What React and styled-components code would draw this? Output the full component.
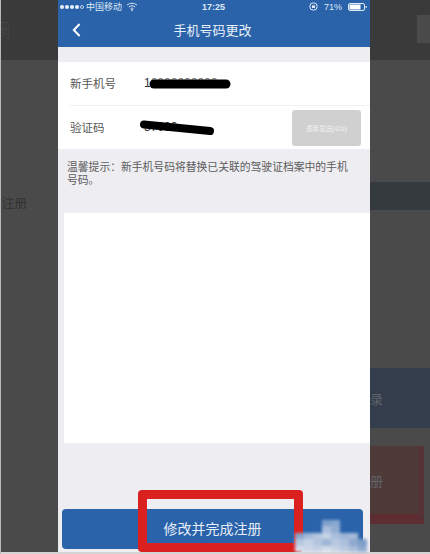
import React from 'react'
import styled, { createGlobalStyle } from 'styled-components'

const GlobalStyle = createGlobalStyle`
  html, body {
    margin: 0;
    padding: 0;
    background: #4a4a4a;
    overflow: hidden;
  }
  * { box-sizing: border-box; }
`

const App = () => {
  return (
    <Shot>
      <GlobalStyle />
      <Page>
        <LeftSide>
          <DimHeader>
            <GhostTitle>码</GhostTitle>
          </DimHeader>
          <GhostLabel>注册</GhostLabel>
        </LeftSide>

        <Phone>
          <StatusBar>
            <Carrier>
              <Signal>
                <Dot /><Dot /><Dot /><Dot /><Dot $empty />
              </Signal>
              <span>中国移动</span>
              <svg width="12" height="9" viewBox="0 0 12 9" fill="none" stroke="#dfe9f6" strokeWidth="1">
                <path d="M1 3.2C4 .6 8 .6 11 3.2" />
                <path d="M2.8 5C4.8 3.4 7.2 3.4 9.2 5" />
                <path d="M4.6 6.7C5.5 6 6.5 6 7.4 6.7" />
                <circle cx="6" cy="8" r=".5" fill="#dfe9f6" />
              </svg>
            </Carrier>
            <Clock>17:25</Clock>
            <Battery>
              <svg width="9" height="9" viewBox="0 0 9 9" fill="none" stroke="#dfe9f6" strokeWidth="1">
                <circle cx="4.5" cy="4.5" r="3.7" />
                <rect x="3" y="3.4" width="3" height="2.6" fill="#dfe9f6" stroke="none" />
              </svg>
              <span>71%</span>
              <svg width="19" height="8" viewBox="0 0 19 8">
                <rect x=".5" y=".5" width="16" height="7" rx="1.5" fill="none" stroke="#dfe9f6" />
                <rect x="1.5" y="1.5" width="11" height="5" fill="#fff" />
                <rect x="17.5" y="3" width="1.2" height="2" fill="#dfe9f6" />
              </svg>
            </Battery>
          </StatusBar>

          <NavBar>
            <BackIcon width="9" height="14" viewBox="0 0 9 14" fill="none" stroke="#fff" strokeWidth="2">
              <path d="M7.6 1 1.8 7l5.8 6" />
            </BackIcon>
            手机号码更改
          </NavBar>

          <Form>
            <Row>
              <Label>新手机号</Label>
              <Value>1<Hidden>0000000000</Hidden></Value>
            </Row>
            <Row $last>
              <Label>验证码</Label>
              <Value>37000</Value>
              <Resend>重新发送(42s)</Resend>
            </Row>
          </Form>

          <Tip>温馨提示：新手机号码将替换已关联的驾驶证档案中的手机号码。</Tip>
          <Blank />

          <Footer>
            <Submit>修改并完成注册</Submit>
          </Footer>
        </Phone>

        <RightSide>
          <DimHeader $right>
            <GhostButton />
          </DimHeader>
          <DarkBand />
          <BlueBand>
            <BandText>录</BandText>
          </BlueBand>
          <RedBand>
            <BandText>册</BandText>
          </RedBand>
        </RightSide>

        <Scribble width="92" height="16" viewBox="0 0 92 16" $left={148} $top={75.5}>
          <path d="M6 8h72" stroke="#000" strokeWidth="9" strokeLinecap="round" />
        </Scribble>
        <Scribble width="84" height="22" viewBox="0 0 84 22" $left={136} $top={117}>
          <path d="M8 7.5 74 14" stroke="#000" strokeWidth="8" strokeLinecap="round" />
        </Scribble>
        <Highlight />
        <Mosaic>
          {mosaicCells.map((color, i) => (
            <MosaicCell key={i} style={{ background: color }} />
          ))}
        </Mosaic>
      </Page>
      <BottomEdge />
    </Shot>
  )
}

const mosaicCells = [
  'transparent', 'transparent', 'transparent', '#7fa0cb', '#8aa8d0', 'transparent', 'transparent', 'transparent',
  'transparent', 'transparent', 'transparent', '#a9bfdc', '#93aed4', 'transparent', 'transparent', 'transparent',
  '#8aa5cc', '#a5bbd9', '#b5c6e0', '#c4d3e6', '#a9bedb', '#9fb6d7', '#a8bcd9', 'transparent',
  '#b6c7df', '#c5d2e5', '#b3c5de', '#9db5d6', '#b7c8e0', '#abc0dc', '#8ea9cf', '#7e9dc9',
  '#d3dce9', '#cad5e6', '#c4d1e4', '#d4deeb', '#c7d4e6', '#b9c9e0', '#a9bedb', '#8faad0',
]

const Shot = styled.div`
  width: 430px;
  height: 554px;
  display: flex;
  flex-direction: column;
  overflow: hidden;
  border-left: 1px solid #b9b9b9;
  font-family: "Liberation Sans", "Noto Sans CJK SC", sans-serif;
`

const Page = styled.div`
  position: relative;
  flex: 1;
  display: flex;
  min-height: 0;
  background: #4a4a4a;
`

const BottomEdge = styled.div`
  height: 2px;
  background: #d4d4d4;
`

const LeftSide = styled.div`
  width: 57px;
  display: flex;
  flex-direction: column;
  overflow: hidden;
`

const RightSide = styled.div`
  flex: 1;
  display: flex;
  flex-direction: column;
  overflow: hidden;
`

const DimHeader = styled.div`
  height: 60px;
  flex: none;
  background: #3a3a3a;
  display: flex;
  align-items: center;
  justify-content: ${props => (props.$right ? 'flex-end' : 'flex-start')};
`

const GhostTitle = styled.div`
  flex: none;
  font-size: 9px;
  line-height: 10px;
  margin-top: -1px;
  transform: scaleY(2.2);
  color: #474747;
`

const GhostLabel = styled.div`
  margin: 136px 0 0 1px;
  font-size: 12.5px;
  line-height: 16px;
  color: #333;
`

const GhostButton = styled.div`
  width: 13px;
  height: 28px;
  margin-top: -2px;
  background: #4b4b4b;
`

const DarkBand = styled.div`
  height: 28px;
  margin-top: 122px;
  background: #353a3e;
`

const BlueBand = styled.div`
  height: 60px;
  margin-top: 158px;
  background: #333d4c;
  display: flex;
  align-items: center;
`

const RedBand = styled.div`
  width: 54px;
  height: 78px;
  margin-top: 18px;
  background: #4f3a3a;
  border-bottom: 10px solid #5d2d32;
  border-right: 6px solid #553236;
  display: flex;
  align-items: center;
`

const BandText = styled.span`
  margin-left: 0;
  font-size: 13px;
  color: #5f6468;
`

const Phone = styled.div`
  width: 312px;
  display: flex;
  flex-direction: column;
  background: #eeeef2;
`

const StatusBar = styled.div`
  height: 13px;
  padding: 0 3px 0 2px;
  display: grid;
  grid-template-columns: 1fr auto 1fr;
  align-items: center;
  background: #2a63aa;
  color: #dfe9f6;
  font-size: 9px;
`

const Carrier = styled.div`
  display: flex;
  align-items: center;
  gap: 4px;
`

const Signal = styled.div`
  display: flex;
  gap: 1px;
  margin-right: -2px;
`

const Dot = styled.i`
  width: 4px;
  height: 4px;
  border-radius: 50%;
  background: ${props => (props.$empty ? 'transparent' : '#eaf0f8')};
  border: ${props => (props.$empty ? '0.6px solid #bfd0e6' : 'none')};
`

const Clock = styled.div`
  font-weight: bold;
  font-size: 9px;
`

const Battery = styled.div`
  display: flex;
  align-items: center;
  justify-content: flex-end;
  gap: 6px;
`

const NavBar = styled.div`
  position: relative;
  height: 34px;
  padding: 0 3px 2px 0;
  display: flex;
  align-items: center;
  justify-content: center;
  background: #2a63aa;
  color: #e9f0f8;
  font-size: 13px;
`

const BackIcon = styled.svg`
  position: absolute;
  left: 14px;
  top: 10px;
`

const Form = styled.div`
  margin-top: 15px;
  padding-left: 12px;
  background: #fff;
`

const Row = styled.div`
  height: ${props => (props.$last ? '43px' : '44px')};
  padding-right: 9px;
  display: flex;
  align-items: center;
  border-bottom: ${props => (props.$last ? 'none' : '1px solid #f1f1f3')};
`

const Label = styled.div`
  width: 74px;
  margin-top: -2px;
  font-size: 11.5px;
  color: #555;
`

const Value = styled.div`
  flex: 1;
  margin-top: -2px;
  font-size: 12px;
  color: #333;
`

const Hidden = styled.span`
  color: #777;
`

const Resend = styled.div`
  width: 69px;
  height: 36px;
  display: flex;
  align-items: center;
  justify-content: center;
  border-radius: 3px;
  background: #d0d0d0;
  color: #f0f0f0;
  font-size: 6.5px;
`

const Tip = styled.div`
  height: 64px;
  padding: 12px 20px 0 9px;
  font-size: 10.8px;
  line-height: 13px;
  color: #5c5c5c;
`

const Blank = styled.div`
  height: 230px;
  margin-left: 6px;
  background: #fff;
`

const Footer = styled.div`
  flex: 1;
  display: flex;
  align-items: flex-end;
  padding: 0 7px 3px 4px;
`

const Submit = styled.div`
  width: 100%;
  height: 40px;
  display: flex;
  align-items: center;
  justify-content: center;
  padding-bottom: 3px;
  border-radius: 4px;
  background: #2a63aa;
  color: #e6eef8;
  font-size: 14px;
`

const Scribble = styled.svg`
  position: absolute;
  left: ${props => props.$left - 1}px;
  top: ${props => props.$top}px;
`

const Highlight = styled.div`
  position: absolute;
  left: 137px;
  top: 490px;
  width: 165px;
  height: 62px;
  border: 9px solid #db2020;
  border-radius: 4px;
`

const Mosaic = styled.div`
  position: absolute;
  left: 294px;
  top: 520px;
  width: 72px;
  height: 32px;
  display: grid;
  grid-template-columns: repeat(8, 9px);
  grid-auto-rows: 6.4px;
  filter: blur(1.5px);
`

const MosaicCell = styled.div``

export default App
